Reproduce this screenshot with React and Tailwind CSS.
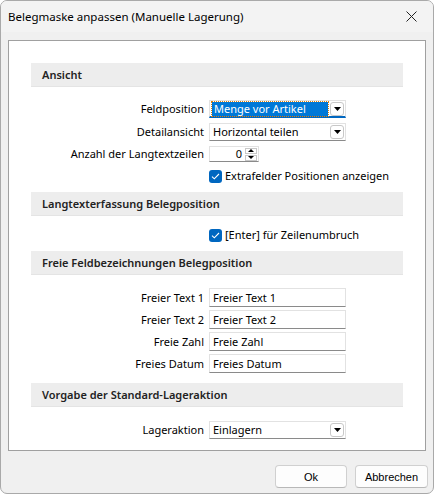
import React from "react";

const ui = { fontFamily: '"Noto Sans", "Open Sans", sans-serif' };

function DropArrow() {
  return (
    <span className="flex h-[14px] w-[14px] items-center justify-center rounded-[3px] border border-[#c8c8c8] bg-white">
      <svg width="7" height="4" viewBox="0 0 7 4">
        <path d="M0 0h7L3.5 4z" fill="#000" />
      </svg>
    </span>
  );
}

function Combo({ value, focused }) {
  return (
    <div
      className={
        "flex h-[18px] w-[137px] items-center justify-between border border-[#e2e2e2] bg-white pr-[1px] " +
        (focused ? "border-b-2 border-b-[#0067c0]" : "border-b-[#8a8a8a]")
      }
    >
      {focused ? (
        <span className="ml-[2px] flex h-[14px] w-[116px] items-center bg-[#0078d7] pl-[2px] text-white outline outline-1 outline-dotted outline-[#e0800a]">
          {value}
        </span>
      ) : (
        <span className="pl-[3px]">{value}</span>
      )}
      <DropArrow />
    </div>
  );
}

function TextField({ value }) {
  return (
    <div className="flex h-[19px] w-[137px] items-center border border-[#e2e2e2] border-b-[#8a8a8a] bg-white pl-[3px]">
      {value}
    </div>
  );
}

function Check({ label }) {
  return (
    <div className="flex items-center gap-[3px]">
      <span className="flex h-[13px] w-[13px] items-center justify-center rounded-[3px] bg-[#0067c0]">
        <svg width="9" height="7" viewBox="0 0 9 7">
          <path d="M1 3.6l2.3 2.2L8 1" stroke="#fff" strokeWidth="1.1" fill="none" />
        </svg>
      </span>
      <span>{label}</span>
    </div>
  );
}

function Row({ label, children, className = "" }) {
  return (
    <div className={"flex items-center " + className}>
      <div className="w-[174px] pr-[1px] text-right">{label}</div>
      <div className="ml-[4px]">{children}</div>
    </div>
  );
}

function Header({ title, className = "" }) {
  return (
    <div
      className={
        "flex h-[24px] items-center border-b border-[#e4e4e4] bg-[#ededed] pl-[11px] font-semibold text-[#222] " +
        className
      }
    >
      {title}
    </div>
  );
}

export default function App() {
  return (
    <div className="h-[495px] w-[436px] bg-white text-[11px] leading-[14px] text-black" style={ui}>
      <div className="flex h-[494px] w-[434px] flex-col overflow-hidden rounded-[7px] border border-[#a9a9a9] bg-[#f0f0f0]">
        <div className="flex h-[31px] items-center justify-between bg-[#f3f3f3] pl-[7px] pr-[16px] text-[11.5px]">
          <span>Belegmaske anpassen (Manuelle Lagerung)</span>
          <svg width="11" height="11" viewBox="0 0 11 11">
            <path d="M0.5 0.5l10 10M10.5 0.5l-10 10" stroke="#222" strokeWidth="1" />
          </svg>
        </div>
        <div className="px-[7px] pt-[8px]">
          <div className="h-[411px] border border-[#a0a0a0] bg-white px-[22px] pt-[22px]">
            <Header title="Ansicht" />
            <Row label="Feldposition" className="mt-[13px]">
              <Combo value="Menge vor Artikel" focused />
            </Row>
            <Row label="Detailansicht" className="mt-[5px]">
              <Combo value="Horizontal teilen" />
            </Row>
            <Row label="Anzahl der Langtextzeilen" className="mt-[5px]">
              <div className="flex h-[16px] w-[50px] items-center justify-end border border-[#e2e2e2] border-b-[#8a8a8a] bg-white pr-[1px]">
                <span className="mr-[3px]">0</span>
                <div className="flex flex-col gap-[1px]">
                  <span className="flex h-[6px] w-[12px] items-center justify-center border border-[#c8c8c8]">
                    <svg width="6" height="3" viewBox="0 0 6 3"><path d="M0 3h6L3 0z" fill="#000" /></svg>
                  </span>
                  <span className="flex h-[6px] w-[12px] items-center justify-center border border-[#c8c8c8]">
                    <svg width="6" height="3" viewBox="0 0 6 3"><path d="M0 0h6L3 3z" fill="#000" /></svg>
                  </span>
                </div>
              </div>
            </Row>
            <Row label="" className="mt-[7px]">
              <Check label="Extrafelder Positionen anzeigen" />
            </Row>
            <Header title="Langtexterfassung Belegposition" className="mt-[9px]" />
            <Row label="" className="mt-[12px]">
              <Check label="[Enter] für Zeilenumbruch" />
            </Row>
            <Header title="Freie Feldbezeichnungen Belegposition" className="mt-[9px]" />
            <Row label="Freier Text 1" className="mt-[13px]">
              <TextField value="Freier Text 1" />
            </Row>
            <Row label="Freier Text 2" className="mt-[3px]">
              <TextField value="Freier Text 2" />
            </Row>
            <Row label="Freie Zahl" className="mt-[3px]">
              <TextField value="Freie Zahl" />
            </Row>
            <Row label="Freies Datum" className="mt-[3px]">
              <TextField value="Freies Datum" />
            </Row>
            <Header title="Vorgabe der Standard-Lageraktion" className="mt-[10px]" />
            <Row label="Lageraktion" className="mt-[14px]">
              <Combo value="Einlagern" />
            </Row>
          </div>
        </div>
        <div
          className="flex justify-end gap-[8px] pr-[5px] pt-[14px] text-[11px]"
          style={{ fontFamily: '"Liberation Sans", Arial, sans-serif' }}
        >
          <button className="h-[23px] w-[72px] rounded-[4px] border border-[#d0d0d0] border-b-[#b8b8b8] bg-[#fdfdfd]">
            Ok
          </button>
          <button className="h-[23px] w-[73px] rounded-[4px] border border-[#d0d0d0] border-b-[#b8b8b8] bg-[#fdfdfd]">
            Abbrechen
          </button>
        </div>
      </div>
    </div>
  );
}
